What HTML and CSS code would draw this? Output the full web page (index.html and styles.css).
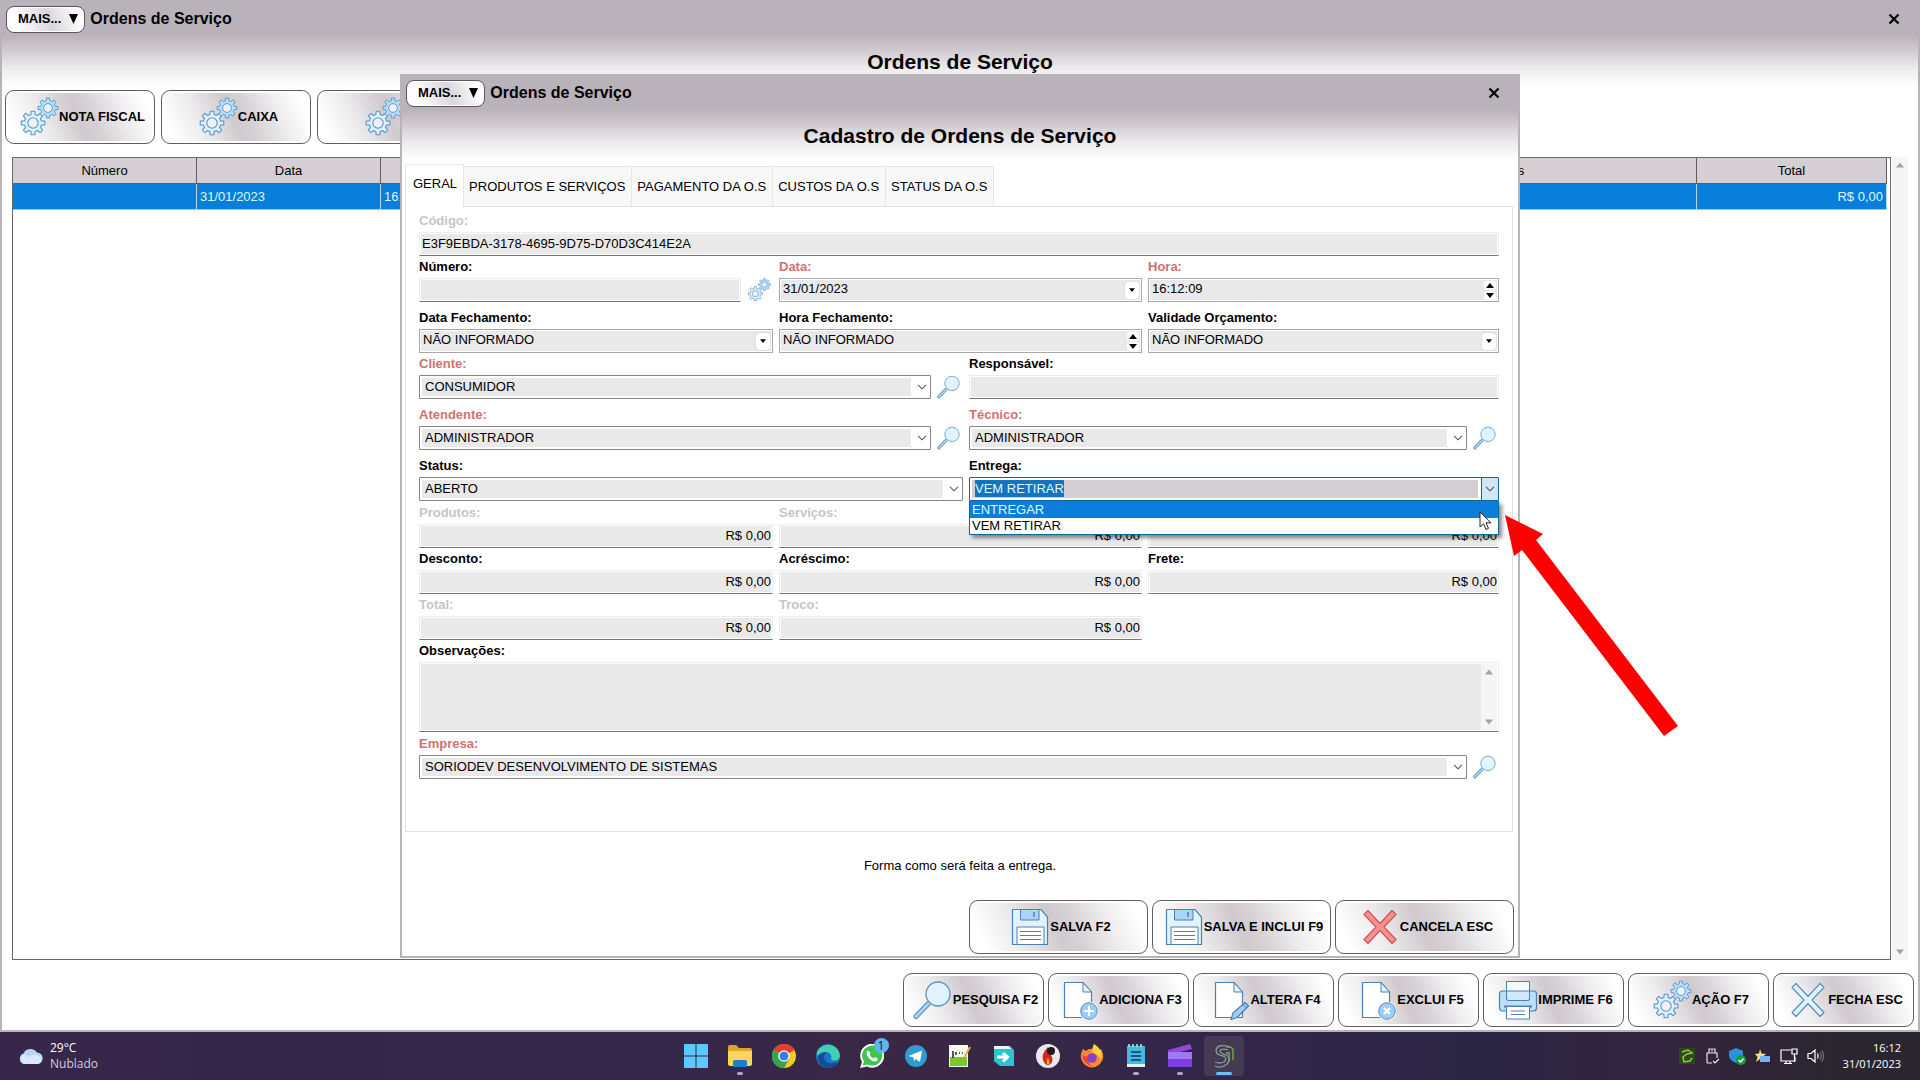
FILE: index.html
```html
<!DOCTYPE html>
<html lang="pt-BR">
<head>
<meta charset="utf-8">
<title>Ordens de Serviço</title>
<link rel="stylesheet" href="styles.css">
</head>
<body>
<svg class="sprite" aria-hidden="true">
  <symbol id="gear" viewBox="-12 -12 24 24">
    <path d="M7.8-1.9 10.9-1.7V1.7L7.8 1.9 6.9 4.1 8.9 6.5 6.5 8.9 4.1 6.9 1.9 7.8 1.7 10.9H-1.7L-1.9 7.8-4.1 6.9-6.5 8.9-8.9 6.5-6.9 4.1-7.8 1.9-10.9 1.7V-1.7L-7.8-1.9-6.9-4.1-8.9-6.5-6.5-8.9-4.1-6.9-1.9-7.8-1.7-10.9H1.7L1.9-7.8 4.1-6.9 6.5-8.9 8.9-6.5 6.9-4.1Z"/>
    <circle r="4.8" fill="#eef0f4"/>
  </symbol>
  <symbol id="gears" viewBox="0 0 40 40">
    <g stroke="#5b94c8" stroke-width="1" stroke-linejoin="round">
      <use href="#gear" x="1" y="13" width="26" height="26" fill="#dcf3ff"/>
      <use href="#gear" x="18" y="0" width="22" height="22" fill="#b4defb"/>
    </g>
  </symbol>
  <symbol id="lens" viewBox="0 0 40 40">
    <path d="M15 24 3 36.500" stroke="#4f86b5" stroke-width="5" stroke-linecap="round"/>
    <path d="M16 23 3 36.500" stroke="#a9d5f5" stroke-width="3" stroke-linecap="round"/>
    <circle cx="25" cy="14" r="12" fill="#dff4ff" stroke="#5f94c0" stroke-width="1.300"/>
  </symbol>
  <symbol id="floppy" viewBox="0 0 40 40">
    <path d="M2.500 2.500H31L37.500 10V37.500H2.500Z" fill="#dff4ff" stroke="#4f7fae" stroke-width="1.200"/>
    <path d="M10.500 2.500H29V13H10.500Z" fill="#a9d6f8" stroke="#4f7fae"/>
    <path d="M24 5V10" stroke="#4f7fae" stroke-width="1.500"/>
    <path d="M7 20H34V37.500H7Z" fill="#fff" stroke="#4f7fae"/>
    <path d="M10 24.500H31M10 28.500H31M10 32.500H31" stroke="#4f7fae"/>
  </symbol>
  <symbol id="cross" viewBox="0 0 40 40">
    <path d="M8 3.500 20 16.500 32 3.500 36 7.500 24 20 36 32.500 32 36.500 20 23.500 8 36.500 4 32.500 16 20 4 7.500Z" stroke-width="1.200" stroke-linejoin="round"/>
  </symbol>
  <symbol id="page" viewBox="0 0 40 40">
    <path d="M5.500 2.500H24L32.500 12V37.500H5.500Z" fill="#fff" stroke="#4f7fae" stroke-width="1.200"/>
    <path d="M24 2.500V12H32.500Z" fill="#dff4ff" stroke="#4f7fae" stroke-linejoin="round"/>
  </symbol>
  <symbol id="page-add" viewBox="0 0 40 40">
    <use href="#page"/>
    <circle cx="30" cy="31" r="9.500" fill="#fff"/><circle cx="30" cy="31" r="8.300" fill="#9ecdf6" stroke="#5b8fc0"/>
    <path d="M25 31H35M30 26V36" stroke="#fff" stroke-width="2"/>
  </symbol>
  <symbol id="page-edit" viewBox="0 0 40 40">
    <use href="#page"/>
    <path d="M21 39.500 23 33 35 22.500 38.500 26 27 37.500Z" fill="#9ecdf6" stroke="#4f7fae" stroke-width="1.200" stroke-linejoin="round"/>
    <path d="M33 24.500 36.500 28" stroke="#4f7fae"/>
  </symbol>
  <symbol id="page-del" viewBox="0 0 40 40">
    <use href="#page"/>
    <circle cx="30" cy="31" r="9.500" fill="#fff"/><circle cx="30" cy="31" r="8.300" fill="#9ecdf6" stroke="#5b8fc0"/>
    <path d="M27 28 33 34M33 28 27 34" stroke="#fff" stroke-width="2.200"/>
  </symbol>
  <symbol id="printer" viewBox="0 0 40 40">
    <rect x="1.500" y="11" width="37" height="20" rx="3" fill="#b9e0fb" stroke="#4f7fae" stroke-width="1.200"/>
    <path d="M8.500 1.500H31.500V20H8.500Z" fill="#f4fbff" stroke="#4f7fae"/>
    <path d="M8.500 11H31.500V18.500Q31.500 20.500 29.500 20.500H10.500Q8.500 20.500 8.500 18.500Z" fill="#cfeafd" stroke="#4f7fae"/>
    <path d="M6 26.500H34" stroke="#4f7fae" stroke-width="2"/>
    <path d="M8.500 26.500H31.500V39H8.500Z" fill="#fff" stroke="#4f7fae"/>
    <path d="M13 31H27M13 34.500H27" stroke="#4f7fae"/>
  </symbol>
  <symbol id="chevron" viewBox="0 0 10 6"><path d="M1 .8 5 4.800 9 .8" fill="none" stroke="#555" stroke-width="1.100"/></symbol>
  <symbol id="down" viewBox="0 0 8 5"><path d="M0 0H8L4 5Z"/></symbol>
  <symbol id="up" viewBox="0 0 8 5"><path d="M0 5H8L4 0Z"/></symbol>
</svg>

<div class="desktop">
  <main class="window">
    <header class="head">
      <div class="titlebar">
        <button class="more">MAIS...<svg width="9" height="10"><path d="M0 0H9L4.500 10Z"/></svg></button>
        <span class="title">Ordens de Serviço</span>
        <button class="close" aria-label="Fechar"><svg width="12" height="12"><path d="M1.500 1.500 10.500 10.500M10.500 1.500 1.500 10.500" stroke="#000" stroke-width="2.200"/></svg></button>
      </div>
      <h1>Ordens de Serviço</h1>
    </header>
    <div class="tools">
      <button class="btn"><svg><use href="#gears"/></svg>NOTA FISCAL</button>
      <button class="btn"><svg><use href="#gears"/></svg>CAIXA</button>
      <button class="btn"><svg><use href="#gears"/></svg>PIX</button>
    </div>
    <div class="listing">
      <div class="sheet">
        <table>
          <colgroup><col class="c-std"><col class="c-std"><col class="c-std"><col><col class="c-obs"><col class="c-total"></colgroup>
          <thead><tr><th>Número</th><th>Data</th><th>Hora</th><th></th><th>Observações</th><th>Total</th></tr></thead>
          <tbody><tr><td></td><td>31/01/2023</td><td>16:</td><td></td><td></td><td class="num">R$ 0,00</td></tr></tbody>
        </table>
      </div>
      <div class="scroll"><svg width="8" height="6"><use href="#up"/></svg><svg width="8" height="6"><use href="#down"/></svg></div>
    </div>
    <footer class="actions">
      <button class="btn"><svg><use href="#lens"/></svg>PESQUISA F2</button>
      <button class="btn"><svg><use href="#page-add"/></svg>ADICIONA F3</button>
      <button class="btn"><svg><use href="#page-edit"/></svg>ALTERA F4</button>
      <button class="btn"><svg><use href="#page-del"/></svg>EXCLUI F5</button>
      <button class="btn"><svg><use href="#printer"/></svg>IMPRIME F6</button>
      <button class="btn"><svg><use href="#gears"/></svg>AÇÃO F7</button>
      <button class="btn"><svg class="ice"><use href="#cross"/></svg>FECHA ESC</button>
    </footer>
  </main>

  <div class="overlay">
    <section class="window dialog" role="dialog" aria-labelledby="dlg-title">
      <header class="head">
        <div class="titlebar">
          <button class="more">MAIS...<svg width="9" height="10"><path d="M0 0H9L4.500 10Z"/></svg></button>
          <span class="title">Ordens de Serviço</span>
          <button class="close" aria-label="Fechar"><svg width="12" height="12"><path d="M1.500 1.500 10.500 10.500M10.500 1.500 1.500 10.500" stroke="#000" stroke-width="2.200"/></svg></button>
        </div>
        <h2 id="dlg-title">Cadastro de Ordens de Serviço</h2>
      </header>
      <div class="tabs" role="tablist">
        <button class="tab active" role="tab" aria-selected="true">GERAL</button>
        <button class="tab" role="tab">PRODUTOS E SERVIÇOS</button>
        <button class="tab" role="tab">PAGAMENTO DA O.S</button>
        <button class="tab" role="tab">CUSTOS DA O.S</button>
        <button class="tab" role="tab">STATUS DA O.S</button>
      </div>
      <form class="panel">
        <div class="row">
          <div class="field off"><label for="codigo">Código:</label><input class="box" id="codigo" value="E3F9EBDA-3178-4695-9D75-D70D3C414E2A" readonly></div>
        </div>
        <div class="row three">
          <div class="field"><label for="numero">Número:</label>
            <div class="line"><input class="box" id="numero"><button type="button" class="mini" aria-label="Gerar número"><svg><use href="#gears"/></svg></button></div></div>
          <div class="field req"><label for="data">Data:</label>
            <div class="frame"><input id="data" value="31/01/2023"><button type="button" class="drop" aria-label="Abrir calendário"><svg><use href="#down"/></svg></button></div></div>
          <div class="field req"><label for="hora">Hora:</label>
            <div class="frame"><input id="hora" value="16:12:09"><span class="spin"><button type="button" aria-label="Aumentar"><svg><use href="#up"/></svg></button><button type="button" aria-label="Diminuir"><svg><use href="#down"/></svg></button></span></div></div>
        </div>
        <div class="row three apart">
          <div class="field"><label for="dfech">Data Fechamento:</label>
            <div class="frame"><input id="dfech" value="NÃO INFORMADO"><button type="button" class="drop" aria-label="Abrir calendário"><svg><use href="#down"/></svg></button></div></div>
          <div class="field"><label for="hfech">Hora Fechamento:</label>
            <div class="frame"><input id="hfech" value="NÃO INFORMADO"><span class="spin"><button type="button" aria-label="Aumentar"><svg><use href="#up"/></svg></button><button type="button" aria-label="Diminuir"><svg><use href="#down"/></svg></button></span></div></div>
          <div class="field"><label for="valid">Validade Orçamento:</label>
            <div class="frame"><input id="valid" value="NÃO INFORMADO"><button type="button" class="drop" aria-label="Abrir calendário"><svg><use href="#down"/></svg></button></div></div>
        </div>
        <div class="row two">
          <div class="field req"><label for="cliente">Cliente:</label>
            <div class="line"><div class="combo"><select id="cliente"><option>CONSUMIDOR</option></select><svg><use href="#chevron"/></svg></div><button type="button" class="mini" aria-label="Pesquisar cliente"><svg><use href="#lens"/></svg></button></div></div>
          <div class="field"><label for="resp">Responsável:</label><input class="box" id="resp"></div>
        </div>
        <div class="row two apart">
          <div class="field req"><label for="atend">Atendente:</label>
            <div class="line"><div class="combo"><select id="atend"><option>ADMINISTRADOR</option></select><svg><use href="#chevron"/></svg></div><button type="button" class="mini" aria-label="Pesquisar atendente"><svg><use href="#lens"/></svg></button></div></div>
          <div class="field req"><label for="tecnico">Técnico:</label>
            <div class="line"><div class="combo"><select id="tecnico"><option>ADMINISTRADOR</option></select><svg><use href="#chevron"/></svg></div><button type="button" class="mini" aria-label="Pesquisar técnico"><svg><use href="#lens"/></svg></button></div></div>
        </div>
        <div class="row two apart">
          <div class="field"><label for="status">Status:</label>
            <div class="combo"><select id="status"><option>ABERTO</option></select><svg><use href="#chevron"/></svg></div></div>
          <div class="field"><label for="entrega">Entrega:</label>
            <div class="combo open"><select id="entrega"><option>VEM RETIRAR</option></select><svg><use href="#chevron"/></svg>
              <ul class="list" role="listbox" aria-label="Opções de entrega"><li class="on" role="option" aria-selected="true">ENTREGAR</li><li role="option">VEM RETIRAR</li></ul>
              <svg class="pointer" width="14" height="20" viewBox="0 0 14 20"><path d="M1 1V16L4.500 12.800 7 18.500 9.500 17.400 7 11.800H12Z" fill="#fff" stroke="#222"/></svg>
            </div></div>
        </div>
        <div class="row three near">
          <div class="field off"><label for="prod">Produtos:</label><input class="box num" id="prod" value="R$ 0,00"></div>
          <div class="field off"><label for="serv">Serviços:</label><input class="box num" id="serv" value="R$ 0,00"></div>
          <div class="field off"><input class="box num" aria-label="Subtotal" value="R$ 0,00"></div>
        </div>
        <div class="row three">
          <div class="field"><label for="desc">Desconto:</label><input class="box num" id="desc" value="R$ 0,00"></div>
          <div class="field"><label for="acres">Acréscimo:</label><input class="box num" id="acres" value="R$ 0,00"></div>
          <div class="field"><label for="frete">Frete:</label><input class="box num" id="frete" value="R$ 0,00"></div>
        </div>
        <div class="row three">
          <div class="field off"><label for="total">Total:</label><input class="box num" id="total" value="R$ 0,00"></div>
          <div class="field off"><label for="troco">Troco:</label><input class="box num" id="troco" value="R$ 0,00"></div>
        </div>
        <div class="row">
          <div class="field"><label for="obs">Observações:</label>
            <div class="memo"><textarea id="obs"></textarea><div class="scroll"><svg width="8" height="6"><use href="#up"/></svg><svg width="8" height="6"><use href="#down"/></svg></div></div></div>
        </div>
        <div class="row near">
          <div class="field req"><label for="empresa">Empresa:</label>
            <div class="line"><div class="combo"><select id="empresa"><option>SORIODEV DESENVOLVIMENTO DE SISTEMAS</option></select><svg><use href="#chevron"/></svg></div><button type="button" class="mini" aria-label="Pesquisar empresa"><svg><use href="#lens"/></svg></button></div></div>
        </div>
      </form>
      <p class="hint">Forma como será feita a entrega.</p>
      <footer class="confirm">
        <button class="btn"><svg><use href="#floppy"/></svg>SALVA F2</button>
        <button class="btn"><svg><use href="#floppy"/></svg>SALVA E INCLUI F9</button>
        <button class="btn"><svg class="red"><use href="#cross"/></svg>CANCELA ESC</button>
      </footer>
    </section>
  </div>
  <svg class="callout" width="174" height="222" viewBox="0 0 174 222" aria-hidden="true"><path d="M0 0 38 19 31 25 173 211 159 221 17 35 9 41Z" fill="#fe0000"/></svg>
</div>

<nav class="taskbar">
  <div class="weather">
    <svg width="26" height="18" viewBox="0 0 26 18"><path d="M6 17a5.500 5.500 0 0 1-.5-10.500A7.500 7 0 0 1 19 5.500 5.800 5.800 0 0 1 20 17Z" fill="#b9d3f5"/><path d="M6 17a5 5 0 0 1 0-9.500q3 0 5 3 4-5 9-2a5 4.500 0 0 1 0 8.500Z" fill="#dbe9fd"/></svg>
    <div><div>29°C</div><div class="dim">Nublado</div></div>
  </div>
  <div class="apps">
    <button aria-label="Iniciar"><svg viewBox="0 0 24 24"><path d="M0 0H11.500V11.500H0ZM12.500 0H24V11.500H12.500ZM0 12.500H11.500V24H0ZM12.500 12.500H24V24H12.500Z" fill="#5cc8fb"/></svg></button>
    <button class="run" aria-label="Explorador"><svg viewBox="0 0 24 24"><path d="M0 3Q0 1 2 1H8L11 4H22Q24 4 24 6V20H0Z" fill="#e0a526"/><path d="M0 7H24V20Q24 22 22 22H2Q0 22 0 20Z" fill="#fbd560"/><path d="M5 23V18Q5 16 7 16H17Q19 16 19 18V23Z" fill="#1f7fc4"/></svg></button>
    <button aria-label="Chrome"><svg viewBox="0 0 24 24"><circle cx="12" cy="12" r="12" fill="#f9c91f"/><path d="M12 12 1.600 6A12 12 0 0 1 22.400 6Z" fill="#e33b2e"/><path d="M1.600 6A12 12 0 0 0 12 24L17.200 15 12 12Z" fill="#35a44f"/><circle cx="12" cy="12" r="5.800" fill="#fff"/><circle cx="12" cy="12" r="4.500" fill="#3b7be8"/></svg></button>
    <button aria-label="Edge"><svg viewBox="0 0 24 24"><circle cx="12" cy="12" r="12" fill="#1a76c9"/><path d="M1 8A12 12 0 0 1 24 12Q23 17 17 16.500 14 16 15.500 13 15 8 9 8 4 8 1 12Z" fill="#45cfb0"/><path d="M8 14Q8 9 12 9 6 7 2 13 2 22 12 24 19 24 22 18 10 22 8 14Z" fill="#114c94"/></svg></button>
    <button aria-label="WhatsApp, 1 nova mensagem"><svg viewBox="0 0 24 24"><path d="M0 24 2 18A12 12 0 1 1 7 22.500Z" fill="#fff"/><path d="M2.500 21.500 4 17.500A10 10 0 1 1 7.500 20.500Z" fill="#3fc351"/><path d="M8 6.500Q6 8 7 11 9.500 16 14 17.500 17 18 18 15L15 13 13.500 14.500Q11 13.500 9.500 10.500L10.500 9Z" fill="#fff"/></svg><span class="badge">1</span></button>
    <button aria-label="Telegram"><svg viewBox="0 0 24 24"><circle cx="12" cy="12" r="11" fill="#2f9bd4"/><path d="M4.500 12 18 6.500 16 18 11.500 15 10 17.500 9.500 13.500Z" fill="#fff"/></svg></button>
    <button aria-label="Editor"><svg viewBox="0 0 24 24"><path d="M1 1H20V23H1Z" fill="#f6f8f0"/><path d="M2 13H19V22H2Z" fill="#7cc62c"/><path d="M5 7V14M8 8V11M11 9H12M14 9H15" stroke="#222" stroke-width="1.500"/><path d="M22 3 16 14" stroke="#e0b33a" stroke-width="2"/></svg></button>
    <button aria-label="Acesso remoto"><svg viewBox="0 0 24 24"><path d="M2 2H18L22 6V22H8L2 17Z" fill="#2cc5cf"/><path d="M2 2H17L19 5H2Z" fill="#e5fbfc"/><path d="M5 13H15M11 9 15.500 13 11 17.500" fill="none" stroke="#fff" stroke-width="3"/></svg></button>
    <button aria-label="Gravador"><svg viewBox="0 0 24 24"><circle cx="12" cy="12" r="12" fill="#e9e9f1"/><path d="M12 3Q5 10 7 16 9 22 13 21 19 18 15 11 12 9 12 3Z" fill="#d8281d"/><path d="M12 14Q9 18 12 21 15 19 12 14Z" fill="#ffb52e"/><circle cx="15" cy="7" r="4" fill="#1c1c1f"/></svg></button>
    <button aria-label="Firefox"><svg viewBox="0 0 24 24"><path d="M3 5 6 7Q9 4 12 5L14 0Q18 4 19 6L21 5Q26 14 20 20 12 27 4 20-2 14 3 5Z" fill="#ff8a2b"/><path d="M14 0Q24 6 21 15 17 10 12 8Z" fill="#ffd43a"/><path d="M2 11Q3 20 12 22 7 18 8 13Z" fill="#f0433f"/><circle cx="12" cy="14" r="4.800" fill="#8b3fc4"/></svg></button>
    <button class="run" aria-label="Bloco de notas"><svg viewBox="0 0 24 24"><path d="M3 2H21V20H3Z" fill="#45b9dd"/><path d="M3 20H21V23H3Z" fill="#e9eef2"/><path d="M5 0V3M9 0V3M13 0V3M17 0V3" stroke="#cdeaf4" stroke-width="1.500"/><path d="M7 8H17M7 12H17M7 16H17" stroke="#175d7d" stroke-width="1.800"/></svg></button>
    <button class="run" aria-label="Clipchamp"><svg viewBox="0 0 24 24"><path d="M0 6 22 0 24 5 0 11Z" fill="#8d4ad6"/><path d="M0 8H24V21Q24 23 22 23H2Q0 23 0 21Z" fill="#a277f2"/><path d="M0 15H24V21Q24 23 22 23H2Q0 23 0 21Z" fill="#7b3fe0"/></svg></button>
    <button class="run current" aria-label="Ordens de Serviço"><svg viewBox="0 0 24 24" fill="none" stroke="#8a9a92"><path d="M18 3Q6-1 4 6 4 11 11 12 16 14 12 18 8 20 3 18" stroke-width="1.300"/><path d="M16 6Q9 4 8 7 9 10 14 11 20 14 15 20 9 25 3 22" stroke-width="1.300"/><path d="M14 3Q22 2 21 8V16M17 8V17M14 9H17" stroke="#7fae58" stroke-width="1.300"/></svg></button>
  </div>
  <div class="tray">
    <svg width="16" height="16"><rect width="16" height="16" fill="#30491c"/><path d="M3 4 9 2 13 5 8 6 4 9 5 14 11 13 13 10" fill="none" stroke="#8fcb3c" stroke-width="1.500"/></svg>
    <svg width="16" height="16" fill="none" stroke="#e8e6ee" stroke-width="1.200"><path d="M5 5V1H11V5M3 15V5H13V10M3 15H8M9 13 11 15 15 11"/><path d="M7 3H9"/></svg>
    <svg width="17" height="17"><path d="M7 0 14 3V8Q13 13 7 15 1 13 0 8V3Z" fill="#2b93dc"/><circle cx="12" cy="12" r="5" fill="#199a3b"/><path d="M9.500 12 11.500 14 14.500 10.500" fill="none" stroke="#fff" stroke-width="1.300"/></svg>
    <svg width="16" height="16"><path d="M5 1 6.500 5.500 11 6 7.500 9 8 14 5 11 1 14 2.500 9 0 6 4 5.500Z" fill="#f7dc7a"/><rect x="5" y="8" width="10" height="6" fill="#6fb7ee"/></svg>
    <svg width="18" height="16" fill="none" stroke="#fff" stroke-width="1.200"><path d="M11 2H1V13H15V9M4 15.500H12M6 13V15M10 13V15M12 1H17V6H12ZM14.500 6V14"/></svg>
    <svg width="18" height="16" fill="none" stroke="#fff" stroke-width="1.200"><path d="M1 5.500H4L8 2V14L4 10.500H1ZM10.500 5.500Q12 8 10.500 10.500"/><path d="M13 4Q15.500 8 13 12M15 2.500Q18 8 15 13.500" stroke="#77727f"/></svg>
    <div class="clock"><div>16:12</div><div>31/01/2023</div></div>
  </div>
</nav>
</body>
</html>
```

FILE: styles.css
```css
* { box-sizing: border-box; }

body {
  margin: 0;
  min-height: 100vh;
  display: flex;
  flex-direction: column;
  font: 13px/16px "Liberation Sans", Arial, sans-serif;
  color: #000;
}

button, input, select, textarea {
  font: inherit;
  color: inherit;
  margin: 0;
  padding: 0;
  border: 0;
  background: none;
  border-radius: 0;
  outline: 0;
}

.sprite { display: none; }

/* Windows */
.desktop {
  position: relative;
  flex: 1;
  display: flex;
  flex-direction: column;
}

.window {
  flex: 1;
  display: flex;
  flex-direction: column;
  background: linear-gradient(#bab2ba 35px, #c9c3c9 46px, #eceaec 68px, #fff 86px);
  box-shadow: inset 0 0 0 2px #b8b3b8;
}

.head { height: 90px; }

.titlebar {
  display: flex;
  align-items: center;
  height: 38px;
  padding: 0 20px 0 6px;
}

.more {
  display: flex;
  align-items: center;
  gap: 8px;
  height: 27px;
  padding: 0 6px 0 11px;
  border: 1px solid #5b565b;
  border-radius: 8px;
  font-weight: bold;
  background: linear-gradient(70deg, #fff 15%, #dad5da 55%, #fff 90%);
  box-shadow: inset 0 0 0 1px #fff;
}

.title {
  margin-left: 5px;
  font-size: 16px;
  font-weight: bold;
}

.close { display: flex; margin-left: auto; }

h1, h2 {
  margin: 0;
  text-align: center;
  font-size: 21px;
  line-height: 48px;
}

.tools {
  display: flex;
  gap: 7px;
  padding: 0 5px;
}

.btn {
  display: flex;
  align-items: center;
  justify-content: center;
  width: 150px;
  height: 54px;
  padding-left: 4px;
  border: 1px solid #625d62;
  border-radius: 9px;
  font-weight: bold;
  white-space: nowrap;
  background: linear-gradient(65deg, #fff 8%, #eeedee 26%, #d0cacf 48%, #d6d1d5 58%, #efedef 76%, #fff 92%);
  box-shadow: inset 0 0 0 2px #fff;
}

.tools .btn + .btn { margin-left: -1px; }
.btn svg { width: 40px; height: 40px; flex: none; }
.ice { fill: #dff4ff; stroke: #5b8fc0; }
.red { fill: #f98f8f; stroke: #d05555; }

.listing {
  flex: 1;
  display: flex;
  gap: 1px;
  padding: 13px 12px 13px 12px;
}

.sheet {
  flex: 1;
  border: 1px solid #6b676b;
  padding-right: 3px;
  background: #fff;
}

table {
  width: 100%;
  table-layout: fixed;
  border-collapse: separate;
  border-spacing: 0;
}

.c-std { width: 184px; }
.c-obs { width: 421px; }
.c-total { width: 190px; }

th, td { height: 26px; padding: 0 3px; border-right: 1px solid #625d62; }
th { font-weight: normal; background: #d5cfd3; border-bottom: 1px solid #625d62; }
td { color: #d9fbff; background: #0a7edb; border-right-color: #b5dcf7; border-bottom: 1px solid #8cc8f5; }
.num { text-align: right; }

.scroll {
  display: flex;
  flex-direction: column;
  justify-content: space-between;
  align-items: center;
  width: 16px;
  padding: 5px 0;
  background: #f5f5f5;
  fill: #a3a3a3;
}

.actions {
  display: flex;
  justify-content: flex-end;
  gap: 4px;
  padding: 0 6px 5px;
}

.actions .btn { width: 141px; }

/* Dialog */
.overlay {
  position: absolute;
  inset: 0;
  display: grid;
  place-items: center;
}

.dialog {
  width: 1120px;
  max-width: 100%;
  padding-bottom: 4px;
}

.tabs {
  display: flex;
  align-items: flex-end;
  padding-left: 5px;
}

.tab {
  height: 40px;
  padding: 0 6px 0 5px;
  border: 1px solid #e6e6e6;
  border-left: 0;
  border-bottom: 0;
  background: #f8f8f8;
}

.tab.active {
  z-index: 1;
  height: 43px;
  margin-bottom: -1px;
  padding: 0 6px 4px 7px;
  border-left: 1px solid #e6e6e6;
  background: #fff;
}

.panel {
  margin: 0 7px 0 5px;
  padding: 6px 13px 52px;
  border: 1px solid #e2e2e2;
  background: #fff;
}

.row { display: grid; gap: 6px; margin-top: 3px; align-items: end; }
.row:first-child { margin-top: 0; }
.row.near { margin-top: 4px; }
.row.apart { margin-top: 8px; }
.three { grid-template-columns: 354fr 363fr 351fr; }
.two { grid-template-columns: 544fr 530fr; }

.field { display: flex; flex-direction: column; gap: 3px; min-width: 0; }
.field label { font-weight: bold; }
.req label { color: #cf7272; }
.off label { color: #c6c6c6; }

.box, .memo {
  width: 100%;
  height: 24px;
  padding: 0 1px 2px 2px;
  border: 1px solid #ececec;
  border-bottom-color: #777;
  background: #e9e9e9;
  box-shadow: inset 0 0 0 1px #fff;
}

.memo { display: flex; height: 70px; padding: 1px; }
.memo textarea { flex: 1; resize: none; overflow: hidden; }

.line { display: flex; align-items: center; gap: 6px; }
.mini { display: flex; flex: none; width: 26px; }
.mini svg { width: 24px; height: 24px; }

.frame {
  display: flex;
  align-items: center;
  height: 24px;
  padding: 0 2px 0 3px;
  border: 1px solid #a8a8a8;
  background: #e9e9e9;
  box-shadow: inset 0 0 0 1px #fff;
}

.frame input { flex: 1; min-width: 0; padding-bottom: 2px; }

.drop {
  display: grid;
  place-items: center;
  width: 14px;
  height: 17px;
  border-radius: 3px;
  background: #fff;
  box-shadow: 0 0 1px #999;
}

.drop svg { width: 6px; height: 4px; display: block; }
.spin svg { width: 8px; height: 5px; display: block; }
.spin { display: grid; gap: 1px; }
.spin button { display: grid; place-items: center; width: 12px; height: 9px; border-radius: 3px; background: #fff; }

.combo {
  position: relative;
  flex: 1;
  display: grid;
  align-items: center;
}

.combo select {
  grid-area: 1 / 1;
  width: 100%;
  height: 24px;
  padding: 0 20px 1px 5px;
  appearance: none;
  border: 1px solid #858585;
  border-radius: 1px;
  background: linear-gradient(#e9e9e9, #e9e9e9) 2px 2px / calc(100% - 21px) calc(100% - 4px) no-repeat #fff;
}

.combo > svg {
  grid-area: 1 / 1;
  justify-self: end;
  width: 10px;
  height: 6px;
  margin-right: 4px;
  pointer-events: none;
}

.combo.open select {
  color: #d9fbff;
  border-color: #0f6796;
  background:
    linear-gradient(#1673bd, #1673bd) 5px 2px / 89px 17px no-repeat,
    linear-gradient(#0f6796, #0f6796) right 16px top 0 / 1px 100% no-repeat,
    linear-gradient(#cfe7f8, #cfe7f8) right / 16px 100% no-repeat,
    linear-gradient(#d3ced3, #d3ced3) 2px 2px / calc(100% - 22px) calc(100% - 4px) no-repeat,
    #fff;
}

.list {
  position: absolute;
  z-index: 2;
  top: 100%;
  left: 0;
  right: 0;
  margin: 0;
  padding: 0;
  list-style: none;
  border: 1px solid #0f6796;
  border-top: 0;
  background: #fff;
  box-shadow: 3px 3px 4px rgba(0, 0, 0, .45);
}

.list li { padding: 0 2px; line-height: 16px; }
.list .on { line-height: 17px; color: #d9fbff; background: #0a7edb; }

.combo > .pointer {
  position: absolute;
  z-index: 3;
  right: 6px;
  top: 34px;
  width: 14px;
  height: 20px;
  margin: 0;
}

.hint { margin: 0; text-align: center; line-height: 68px; }

.confirm {
  display: flex;
  justify-content: flex-end;
  gap: 4px;
  padding-right: 6px;
}

.confirm .btn { width: 179px; }

.callout {
  position: absolute;
  z-index: 4;
  left: calc(50% + 545px);
  top: calc(50% - 1px);
}

/* Taskbar */
.taskbar {
  display: grid;
  grid-template-columns: 1fr auto 1fr;
  align-items: center;
  height: 48px;
  padding: 0 19px 0 18px;
  color: #fff;
  font: 12px/16px "Open Sans", "Noto Sans", sans-serif;
  background: linear-gradient(90deg, #38274a, #33264a 15%, #34284d 30%, #3a2744 48%, #33264a 62%, #2a2543 78%, #33233c 88%, #2a2630 96%);
}

.weather { display: flex; align-items: center; gap: 6px; }
.dim { color: #d3cedb; }

.apps { display: flex; gap: 4px; }

.apps button {
  position: relative;
  display: grid;
  place-items: center;
  width: 40px;
  height: 40px;
  border-radius: 4px;
}

.apps svg { width: 24px; height: 24px; }

.run::after {
  content: "";
  position: absolute;
  bottom: 1px;
  width: 6px;
  height: 3px;
  border-radius: 2px;
  background: #b3aabb;
}

.apps .current { background: #453a54; }
.current::after { width: 16px; background: #6fbdf0; }

.badge {
  position: absolute;
  top: 2px;
  right: 3px;
  width: 15px;
  height: 15px;
  border-radius: 50%;
  line-height: 15px;
  color: #123;
  background: #5bb8ef;
}

.tray { display: flex; align-items: center; justify-content: flex-end; gap: 9px; }
.clock { margin-left: 9px; font-size: 11px; text-align: right; }
```
